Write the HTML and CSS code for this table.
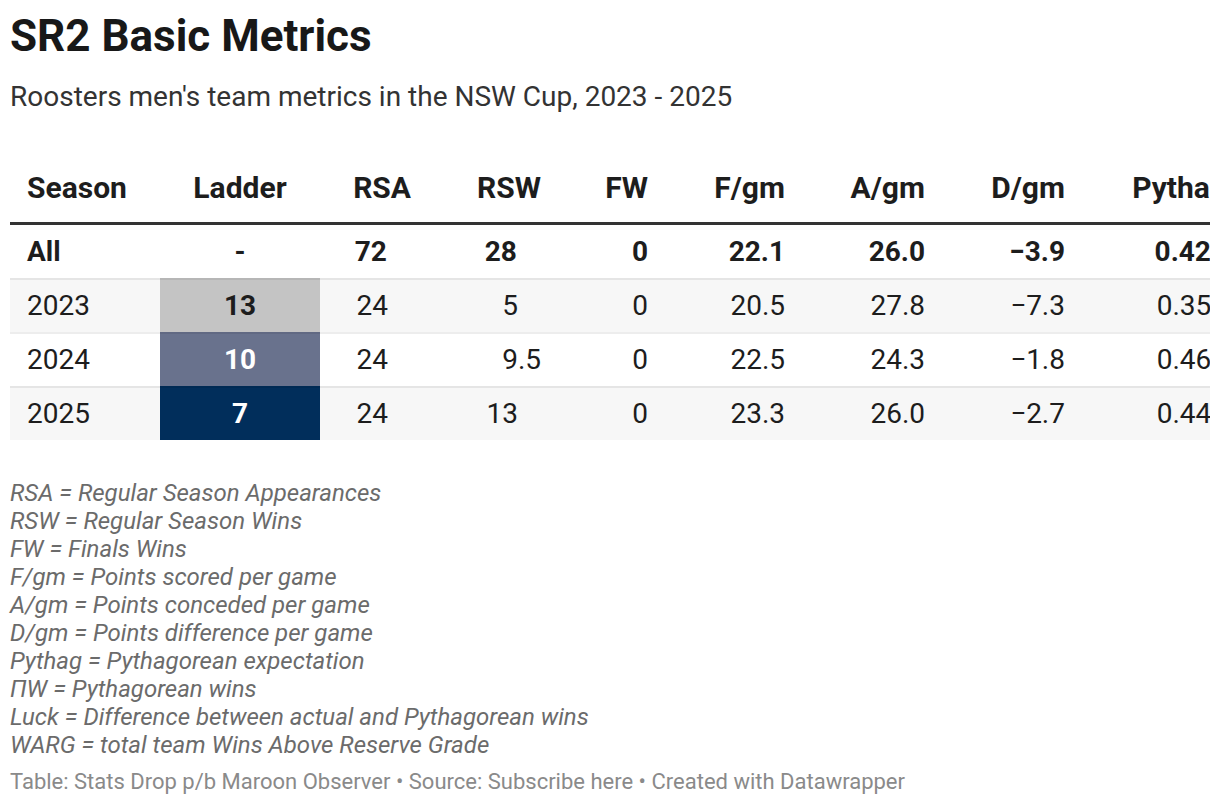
FILE: index.html
```html
<!DOCTYPE html>
<html lang="en">
<head>
<meta charset="utf-8">
<title>SR2 Basic Metrics</title>
<link rel="stylesheet" href="styles.css">
</head>
<body>
<div class="chart">
  <h1 class="title">SR2 Basic Metrics</h1>
  <p class="subtitle">Roosters men's team metrics in the NSW Cup, 2023 - 2025</p>
  <div class="table-wrap">
    <table class="metrics">
      <colgroup>
        <col class="c-season"><col class="c-ladder"><col class="c-rsa"><col class="c-rsw"><col class="c-fw"><col class="c-f"><col class="c-a"><col class="c-d"><col class="c-py">
      </colgroup>
      <thead>
        <tr>
          <th class="left">Season</th>
          <th class="center">Ladder</th>
          <th>RSA</th>
          <th>RSW</th>
          <th>FW</th>
          <th>F/gm</th>
          <th>A/gm</th>
          <th>D/gm</th>
          <th>Pythag</th>
        </tr>
      </thead>
      <tbody>
        <tr class="total">
          <td class="left">All</td>
          <td class="center">-</td>
          <td>72<span class="pad">.0</span></td>
          <td>28<span class="pad">.0</span></td>
          <td>0</td>
          <td>22.1</td>
          <td>26.0</td>
          <td>−3.9</td>
          <td>0.42<span class="pad2">0</span></td>
        </tr>
        <tr class="stripe">
          <td class="left">2023</td>
          <td class="center ladder l13">13</td>
          <td>24<span class="pad">.0</span></td>
          <td>5<span class="pad">.0</span></td>
          <td>0</td>
          <td>20.5</td>
          <td>27.8</td>
          <td>−7.3</td>
          <td>0.35<span class="pad2">0</span></td>
        </tr>
        <tr>
          <td class="left">2024</td>
          <td class="center ladder l10">10</td>
          <td>24<span class="pad">.0</span></td>
          <td>9.5</td>
          <td>0</td>
          <td>22.5</td>
          <td>24.3</td>
          <td>−1.8</td>
          <td>0.46<span class="pad2">0</span></td>
        </tr>
        <tr class="stripe">
          <td class="left">2025</td>
          <td class="center ladder l7">7</td>
          <td>24<span class="pad">.0</span></td>
          <td>13<span class="pad">.0</span></td>
          <td>0</td>
          <td>23.3</td>
          <td>26.0</td>
          <td>−2.7</td>
          <td>0.44<span class="pad2">0</span></td>
        </tr>
      </tbody>
    </table>
  </div>
  <div class="notes">
    <p>RSA = Regular Season Appearances</p>
    <p>RSW = Regular Season Wins</p>
    <p>FW = Finals Wins</p>
    <p>F/gm = Points scored per game</p>
    <p>A/gm = Points conceded per game</p>
    <p>D/gm = Points difference per game</p>
    <p>Pythag = Pythagorean expectation</p>
    <p>ΠW = Pythagorean wins</p>
    <p>Luck = Difference between actual and Pythagorean wins</p>
    <p>WARG = total team Wins Above Reserve Grade</p>
  </div>
  <p class="footer">Table: Stats Drop p/b Maroon Observer • Source: Subscribe here • Created with Datawrapper</p>
</div>
</body>
</html>
```

FILE: styles.css
```css
html, body {
  margin: 0;
  padding: 0;
  background: #ffffff;
}

body {
  font-family: Roboto, "Liberation Sans", sans-serif;
  color: #1d1d1d;
}

.chart {
  padding: 10px;
}

.title {
  margin: 0;
  font-size: 44px;
  line-height: 53px;
  font-weight: 700;
  color: #181818;
}

.subtitle {
  margin: 17px 0 0;
  font-size: 28px;
  line-height: 34px;
  font-weight: 400;
  color: #333333;
}

.table-wrap {
  margin-top: 36px;
  overflow: hidden;
}

.metrics {
  table-layout: fixed;
  width: 1230px;
  border-collapse: separate;
  border-spacing: 0;
  font-size: 28px;
}

.c-season { width: 150px; }
.c-ladder { width: 160px; }
.c-rsa { width: 101px; }
.c-rsw { width: 130px; }
.c-fw { width: 107px; }
.c-f { width: 137px; }
.c-a { width: 140px; }
.c-d { width: 140px; }
.c-py { width: 165px; }

.metrics th {
  padding: 21px 10px 17px;
  font-size: 30px;
  line-height: 34px;
  font-weight: 700;
  text-align: right;
  color: #1d1d1d;
  border-bottom: 3px solid #333333;
  white-space: nowrap;
}

.metrics th:last-child,
.metrics td:last-child {
  padding-right: 13px;
}

.metrics td {
  height: 52px;
  padding: 0 10px;
  line-height: 1;
  text-align: right;
  vertical-align: middle;
  color: #1d1d1d;
  white-space: nowrap;
}

.metrics tbody tr + tr td {
  border-top: 2px solid rgba(0, 0, 0, 0.07);
}

.metrics tr.total td {
  height: 53px;
  font-weight: 700;
}

.metrics tr.stripe td {
  background: #f7f7f7;
}

.metrics .left {
  text-align: left;
  padding-left: 17px;
}

.metrics .center {
  text-align: center;
}

.metrics td.ladder {
  font-weight: 700;
}

.metrics tr td.l13 {
  background: #c4c4c4;
  color: #1d1d1d;
}

.metrics tr td.l10 {
  background: #69728d;
  color: #ffffff;
}

.metrics tr td.l7 {
  background: #012e5b;
  color: #ffffff;
}

.pad, .pad2 {
  visibility: hidden;
}

.notes {
  margin-top: 39px;
}

.notes p {
  margin: 0;
  font-size: 24px;
  line-height: 28px;
  font-style: italic;
  color: #6b6b6b;
}

.footer {
  margin: 9px 0 0;
  font-size: 22px;
  line-height: 28px;
  color: #8a8a8a;
}
```
